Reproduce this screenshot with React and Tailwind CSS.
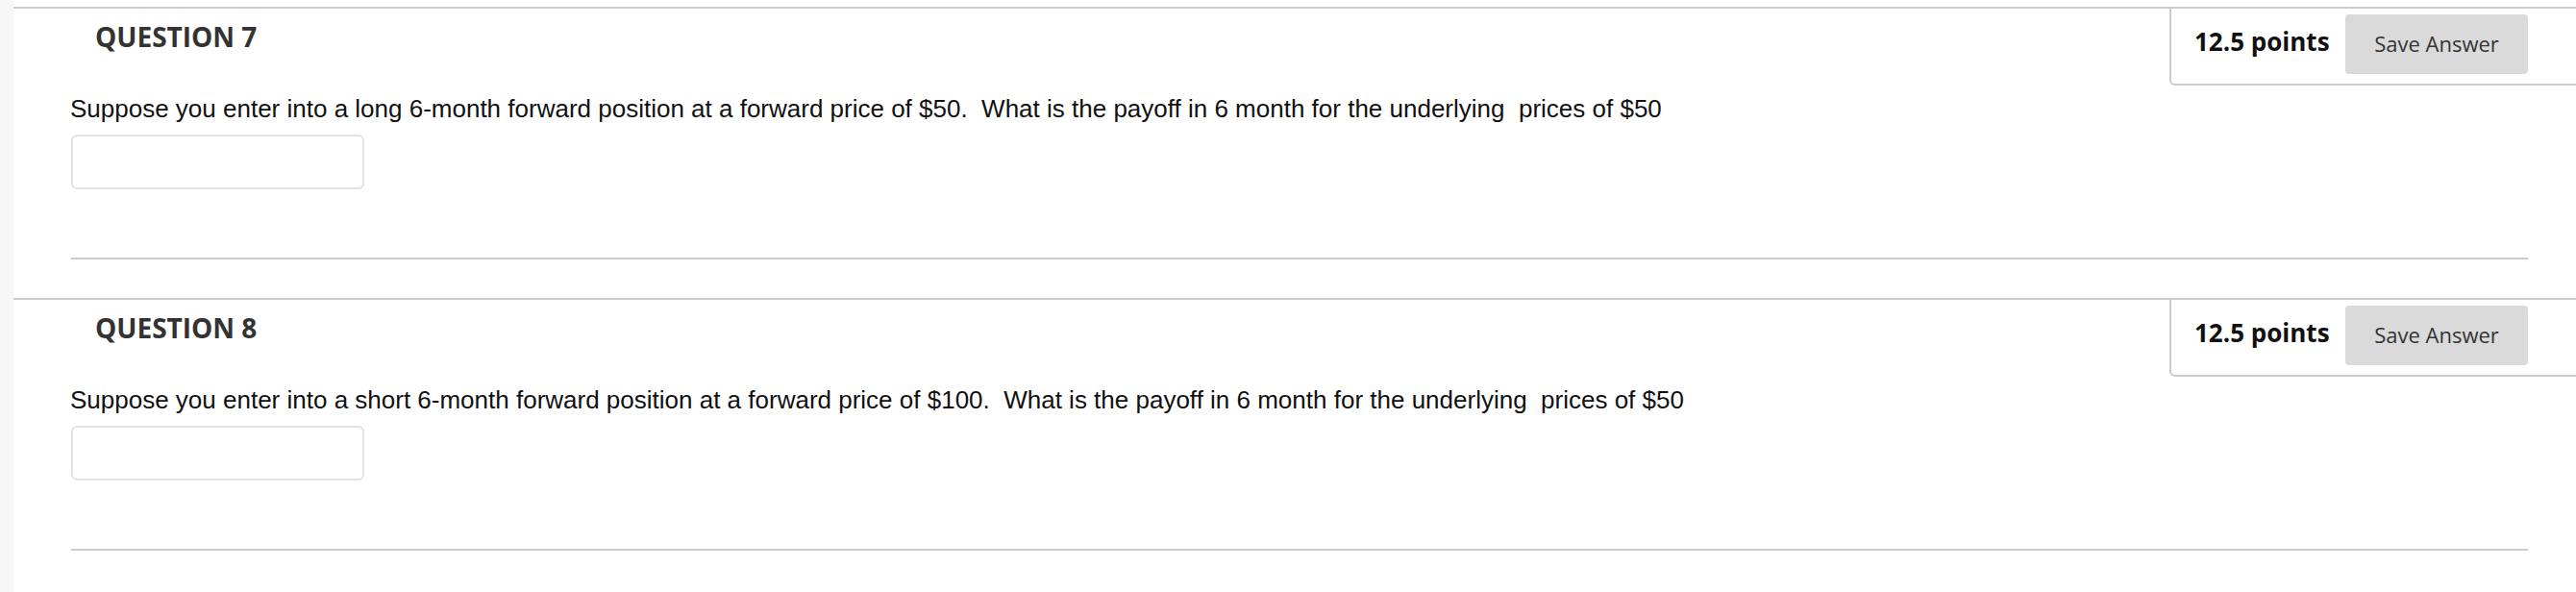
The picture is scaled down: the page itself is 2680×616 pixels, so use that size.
import React from "react";

function Section({ num, text, last }) {
  return (
    <div className="border-t-2 border-[#cccccc]">
      <div className="flex items-start">
        <h2 className="ml-[85px] mt-[10px] text-[28px] leading-[38px] font-bold text-[#333333]" style={{ fontFamily: '"Open Sans", sans-serif' }}>
          QUESTION {num}
        </h2>
        <div className="ml-auto w-[423px] h-[80px] border-l-2 border-b-2 border-[#cccccc] rounded-bl-[6px] flex items-start pl-[24px] pr-[50px]" style={{ fontFamily: '"Open Sans", sans-serif' }}>
          <span className="mt-[16px] text-[26px] leading-[36px] font-bold text-[#111111]">12.5 points</span>
          <button className="ml-auto mt-[6px] w-[190px] h-[62px] pb-[2px] rounded-[4px] bg-[#dadada] text-[22px] text-[#333333]">
            Save Answer
          </button>
        </div>
      </div>
      <div className="pl-[59px] pr-[50px]">
        <p className="mt-[10px] text-[26px] leading-[28px] text-[#111111] whitespace-pre" style={{ fontFamily: '"Liberation Sans", Arial, sans-serif' }}>
          {text}
        </p>
        <div className="mt-[13px] ml-[1px] w-[305px] h-[57px] rounded-[6px] border-2 border-[#e3e3e3] bg-white" />
        <div className="mt-[71px] ml-[1px] h-[2px] bg-[#cccccc]" />
        {!last && <div className="h-[40px]" />}
      </div>
    </div>
  );
}

export default function App() {
  return (
    <div className="flex min-h-[616px] bg-white">
      <div className="w-[14px] shrink-0 bg-[#f7f7f7]" />
      <div className="flex-1 pt-[7px]">
        <Section
          num={7}
          text={"Suppose you enter into a long 6-month forward position at a forward price of $50.  What is the payoff in 6 month for the underlying  prices of $50"}
        />
        <Section
          num={8}
          last
          text={"Suppose you enter into a short 6-month forward position at a forward price of $100.  What is the payoff in 6 month for the underlying  prices of $50"}
        />
      </div>
    </div>
  );
}
